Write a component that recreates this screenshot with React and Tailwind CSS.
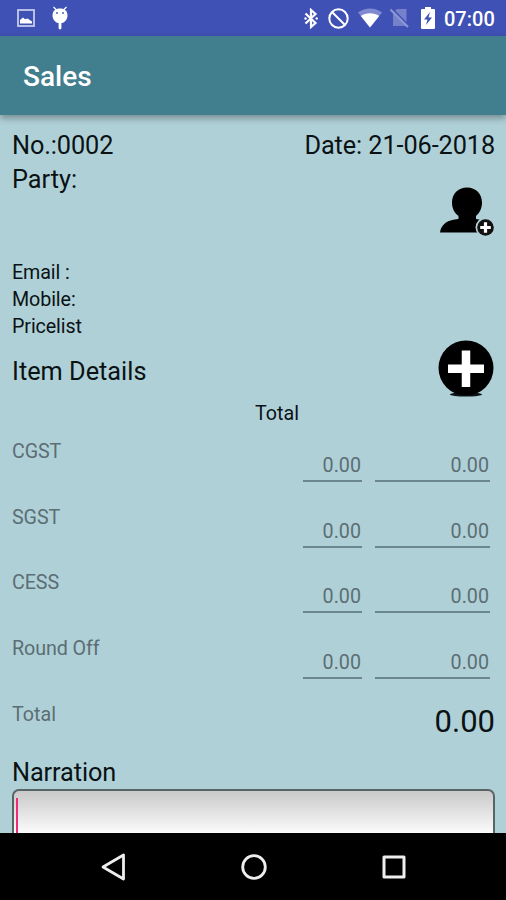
const taxRows = ['CGST', 'SGST', 'CESS', 'Round Off'];

function StatusBar() {
  return (
    <div className="flex h-9 shrink-0 items-center bg-[#4051b5] pr-[11px] pl-[17px] text-white">
      <svg width="18" height="18" viewBox="0 0 18 18">
        <rect x="1" y="1" width="16" height="16" fill="none" stroke="#c5caeb" strokeWidth="1.8" />
        <path d="M3 14.500V11l3-2.500 2 1.700 2.500-.7 4.500 3v2z" fill="#fff" />
      </svg>
      <svg width="18" height="24" viewBox="0 0 18 24" className="ml-4">
        <path d="M2.500 1l3 3M15.500 1l-3 3" stroke="#fff" strokeWidth="1.200" />
        <path d="M1.500 9.500C1.500 5 4.500 2.500 9 2.500s7.500 2.500 7.500 7c0 4-3 7-5.500 7.500H7c-2.500-.5-5.500-3.500-5.500-7.500z" fill="#fff" />
        <circle cx="6" cy="7" r=".9" fill="#4051b5" />
        <circle cx="12" cy="7" r=".9" fill="#4051b5" />
        <path d="M9 16v6" stroke="#fff" strokeWidth="2.800" strokeLinecap="round" />
      </svg>
      <div className="ml-auto flex items-center">
        <svg width="14" height="21" viewBox="0 0 14 21" fill="none" stroke="#fff" strokeWidth="2.200">
          <path d="M1.500 5.500l10 9.500-4.500 4V2l4.500 4-10 9.500" />
          <circle cx="1.500" cy="10.500" r="1.200" fill="#fff" stroke="none" />
          <circle cx="12.700" cy="10.500" r="1.200" fill="#fff" stroke="none" />
        </svg>
        <svg width="21" height="21" viewBox="0 0 21 21" fill="none" stroke="#fff" strokeWidth="2" className="ml-2.5">
          <circle cx="10.500" cy="10.500" r="9.200" />
          <path d="M4 4l13 13" />
        </svg>
        <svg width="24" height="20" viewBox="0 0 24 20" className="ml-[9px]">
          <path d="M0 4.500C7-1 17-1 24 4.500L12 19.500z" fill="#7f8bce" />
          <path d="M2.800 8C8 4.300 16 4.300 21.200 8L12 19.500z" fill="#fff" />
        </svg>
        <svg width="19" height="20" viewBox="0 0 19 20" className="ml-2">
          <path d="M7 1h9.500v17H3V5z" fill="#7582c9" />
          <path d="M1.500 .5l17.500 17.500" stroke="#4051b5" strokeWidth="2" />
          <path d="M.5 1.500l17.500 17.500" stroke="#8d98d3" strokeWidth="2" />
        </svg>
        <svg width="14" height="22" viewBox="0 0 14 22" className="mb-px ml-3">
          <path d="M4 0h6v2h3q1 0 1 1v18q0 1-1 1H1q-1 0-1-1V3q0-1 1-1h3z" fill="#fff" />
          <path d="M9 5L3 12.500h3.500L5 18l6-7.500H7.500z" fill="#4051b5" />
        </svg>
        <span className="mt-px ml-[9px] w-[51px] text-[20px] leading-[24px] font-medium whitespace-nowrap">07:00</span>
      </div>
    </div>
  );
}

function TaxRow({ label }) {
  return (
    <div className="flex h-[65.700px] items-start text-[19.700px] leading-[27px] text-[#5b6e73]">
      <span className="grow tracking-[-0.1px]">{label}</span>
      <span className="mt-[14px] h-[30px] w-[59px] border-b-2 border-[#6b868d] pr-px text-right">0.00</span>
      <span className="mt-[14px] mr-[5px] ml-[13px] h-[30px] w-[115px] border-b-2 border-[#6b868d] pr-px text-right">0.00</span>
    </div>
  );
}

function PersonAddIcon() {
  return (
    <svg width="56" height="50" viewBox="0 0 56 50">
      <path d="M28 1.500c9 0 15 6.500 15 15 0 6-2.500 10.500-6 13.500v3c4 .5 6.500 1.500 9 3v10.500H1C2 38 9 33.500 19.500 33v-3c-4-3-6.500-7.500-6.500-13.500 0-8.500 6-15 15-15z" fill="#000" />
      <circle cx="46.500" cy="41.500" r="10" fill="#b0d0d8" />
      <circle cx="46.500" cy="41.500" r="8.300" fill="#111" />
      <path d="M46.500 36.200v10.600M41.200 41.500h10.600" stroke="#fff" strokeWidth="3.200" />
    </svg>
  );
}

function AddIcon() {
  return (
    <svg width="56" height="58" viewBox="0 0 56 58">
      <ellipse cx="28" cy="54.500" rx="16" ry="2" fill="#0c1315" />
      <circle cx="28" cy="28" r="27.500" fill="#000" />
      <path d="M28 10.500v36.500M10 28.700h36" stroke="#fff" strokeWidth="8.500" />
    </svg>
  );
}

export default function App() {
  return (
    <div className="flex h-[900px] w-[506px] flex-col overflow-hidden bg-[#b0d0d8] font-[Roboto,sans-serif] text-[#0a1214]">
      <StatusBar />
      <header className="z-10 flex h-[79px] shrink-0 items-center bg-[#417e8e] pt-0.5 pl-[23px] text-[28px] font-medium text-white shadow-[0_3px_7px_rgba(0,0,0,0.35)]">
        Sales
      </header>
      <main className="flex min-h-0 grow flex-col overflow-hidden pt-[14px] pr-[11px] pl-3 text-[25.300px] leading-[34px]">
        <div className="flex h-[34px] shrink-0 justify-between">
          <span className="tracking-[-0.1px]">No.:0002</span>
          <span className="tracking-[-0.1px]">Date: 21-06-2018</span>
        </div>
        <div className="flex h-[95.500px] shrink-0 justify-between">
          <span>Party:</span>
          <div className="mt-[23px]">
            <PersonAddIcon />
          </div>
        </div>
        <div className="h-[81.500px] shrink-0 text-[19.700px] leading-[27.400px] tracking-[-0.1px]">
          <div>Email :</div>
          <div>Mobile:</div>
          <div>Pricelist</div>
        </div>
        <div className="flex h-[60px] shrink-0 justify-between">
          <span className="mt-[15px]">Item Details</span>
          <div className="mr-px">
            <AddIcon />
          </div>
        </div>
        <div className="h-[38px] shrink-0 pl-[243px] text-[19.700px] leading-[27px]">Total</div>
        <div className="shrink-0">
          {taxRows.map((label) => (
            <TaxRow key={label} label={label} />
          ))}
        </div>
        <div className="flex h-[55.500px] shrink-0 justify-between">
          <span className="text-[19.700px] leading-[27px] text-[#5b6e73]">Total</span>
          <span className="mt-[3px] text-[31px] leading-[36px]">0.00</span>
        </div>
        <div className="h-[33px] shrink-0 tracking-[-0.1px]">Narration</div>
        <div className="h-[120px] shrink-0 rounded-[7px] border-2 border-[#586466] bg-linear-to-b from-[#c9c9c9] to-white to-[45px] pt-[7px] pl-0.5">
          <div className="h-20 w-[2px] bg-[#ef2b78]" />
        </div>
      </main>
      <nav className="flex h-[67px] shrink-0 items-center bg-black pl-[101px]">
        <svg width="25" height="28" viewBox="0 0 25 28" fill="none" stroke="#eee" strokeWidth="2.800" strokeLinejoin="round">
          <path d="M22.500 2v24L2 14z" />
        </svg>
        <svg width="26" height="26" viewBox="0 0 26 26" fill="none" stroke="#eee" strokeWidth="2.800" className="ml-[115px]">
          <circle cx="13" cy="13" r="11.300" />
        </svg>
        <svg width="24" height="24" viewBox="0 0 24 24" fill="none" stroke="#eee" strokeWidth="3" strokeLinejoin="round" className="ml-[115px]">
          <path d="M2 2h20v20H2z" />
        </svg>
      </nav>
    </div>
  );
}
